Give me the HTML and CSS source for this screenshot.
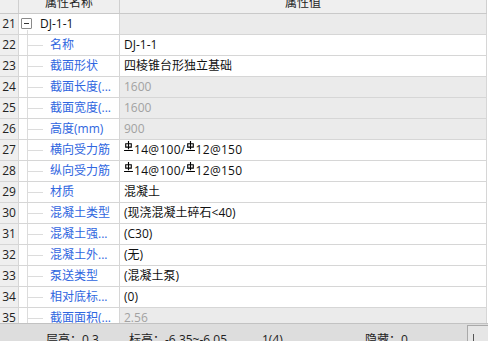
FILE: index.html
```html
<!DOCTYPE html>
<html lang="zh-CN">
<head>
<meta charset="utf-8">
<link rel="stylesheet" href="styles.css">
</head>
<body>
<div class="panel">
  <div class="grid">
    <div class="head">
      <div class="num"></div>
      <div class="hname">属性名称</div>
      <div class="hval">属性值</div>
    </div>
    <div class="row">
      <div class="num">21</div>
      <div class="name root"><span class="toggle"></span><span class="rtext">DJ-1-1</span></div>
      <div class="val ro"></div>
    </div>
    <div class="row">
      <div class="num">22</div>
      <div class="name tree">名称</div>
      <div class="val">DJ-1-1</div>
    </div>
    <div class="row">
      <div class="num">23</div>
      <div class="name tree">截面形状</div>
      <div class="val">四棱锥台形独立基础</div>
    </div>
    <div class="row">
      <div class="num">24</div>
      <div class="name tree">截面长度(...</div>
      <div class="val ro">1600</div>
    </div>
    <div class="row">
      <div class="num">25</div>
      <div class="name tree">截面宽度(...</div>
      <div class="val ro">1600</div>
    </div>
    <div class="row">
      <div class="num">26</div>
      <div class="name tree">高度(mm)</div>
      <div class="val ro">900</div>
    </div>
    <div class="row">
      <div class="num">27</div>
      <div class="name tree">横向受力筋</div>
      <div class="val rebar"><svg class="bar" viewBox="0 0 8 9" width="8" height="9"><path d="M4 0V7.5M1.5 2.5H6.5V5.5H1.5ZM0 8.5H8" fill="none" stroke="#000" stroke-width="1"/></svg>14@100/<svg class="bar" viewBox="0 0 8 9" width="8" height="9"><path d="M4 0V7.5M1.5 2.5H6.5V5.5H1.5ZM0 8.5H8" fill="none" stroke="#000" stroke-width="1"/></svg>12@150</div>
    </div>
    <div class="row">
      <div class="num">28</div>
      <div class="name tree">纵向受力筋</div>
      <div class="val rebar"><svg class="bar" viewBox="0 0 8 9" width="8" height="9"><path d="M4 0V7.5M1.5 2.5H6.5V5.5H1.5ZM0 8.5H8" fill="none" stroke="#000" stroke-width="1"/></svg>14@100/<svg class="bar" viewBox="0 0 8 9" width="8" height="9"><path d="M4 0V7.5M1.5 2.5H6.5V5.5H1.5ZM0 8.5H8" fill="none" stroke="#000" stroke-width="1"/></svg>12@150</div>
    </div>
    <div class="row">
      <div class="num">29</div>
      <div class="name tree">材质</div>
      <div class="val">混凝土</div>
    </div>
    <div class="row">
      <div class="num">30</div>
      <div class="name tree">混凝土类型</div>
      <div class="val">(现浇混凝土碎石&lt;40)</div>
    </div>
    <div class="row">
      <div class="num">31</div>
      <div class="name tree">混凝土强...</div>
      <div class="val">(C30)</div>
    </div>
    <div class="row">
      <div class="num">32</div>
      <div class="name tree">混凝土外...</div>
      <div class="val">(无)</div>
    </div>
    <div class="row">
      <div class="num">33</div>
      <div class="name tree">泵送类型</div>
      <div class="val">(混凝土泵)</div>
    </div>
    <div class="row">
      <div class="num">34</div>
      <div class="name tree">相对底标...</div>
      <div class="val">(0)</div>
    </div>
    <div class="row">
      <div class="num">35</div>
      <div class="name tree">截面面积(...</div>
      <div class="val ro">2.56</div>
    </div>
  </div>
  <div class="status">
    <span class="s1">层高：0.3</span>
    <span class="s2">标高：-6.35~-6.05</span>
    <span class="s3">1(4)</span>
    <span class="s4">隐藏：0</span>
    <span class="sbtn"></span>
  </div>
</div>
</body>
</html>
```

FILE: styles.css
```css
html, body {
  margin: 0;
  padding: 0;
  background: #ffffff;
}
body {
  width: 488px;
  height: 341px;
  overflow: hidden;
  font-family: "Open Sans", "Noto Sans CJK SC", sans-serif;
  font-size: 12px;
  color: #111;
}
.panel {
  width: 488px;
  height: 341px;
  display: flex;
  flex-direction: column;
  overflow: hidden;
}
.grid {
  height: 323px;
  flex: none;
  overflow: hidden;
  width: 487px;
}
.head {
  display: flex;
  height: 20px;
  margin-top: -7px;
  background: #efefef;
  border-bottom: 1px solid #c9c9c9;
  line-height: 20px;
  color: #222;
}
.head .num {
  border-right: 1px solid #cfcfcf;
}
.hname {
  width: 100px;
  border-right: 1px solid #cfcfcf;
  text-align: center;
}
.hval {
  flex: 1;
  border-right: 1px solid #cfcfcf;
  text-align: center;
}
.row {
  display: flex;
  height: 20px;
  border-bottom: 1px solid #d6d6d6;
  line-height: 20px;
}
.num {
  width: 18px;
  flex: none;
  background: #efefef;
  border-right: 1px solid #d6d6d6;
  text-align: center;
  color: #222;
}
.name {
  width: 100px;
  flex: none;
  border-right: 1px solid #d6d6d6;
  background-color: #fff;
  white-space: nowrap;
  overflow: hidden;
}
.tree {
  padding-left: 31px;
  width: 69px;
  color: #2f66e0;
  background-image:
    linear-gradient(#dcdcdc, #dcdcdc),
    linear-gradient(#dcdcdc, #dcdcdc);
  background-size: 1px 100%, 15px 1px;
  background-position: 8px 0, 9px 10px;
  background-repeat: no-repeat;
}
.root {
  display: flex;
  align-items: center;
  background-image: linear-gradient(#dcdcdc, #dcdcdc);
  background-size: 1px 4px;
  background-position: 8px 16px;
  background-repeat: no-repeat;
}
.toggle {
  width: 9px;
  height: 9px;
  border: 1px solid #8a8a8a;
  margin-left: 2px;
  margin-top: -1px;
  background:
    linear-gradient(#333, #333) center / 5px 1px no-repeat,
    #fff;
  border-radius: 1px;
  flex: none;
}
.rtext {
  margin-left: 8px;
  color: #111;
}
.val {
  flex: 1;
  border-right: 1px solid #d6d6d6;
  padding-left: 4px;
  white-space: nowrap;
  color: #111;
  background: #fff;
}
.val.ro {
  background: #ebebeb;
  color: #a2a2a2;
}
.rebar {
  letter-spacing: 0.3px;
}
.bar {
  width: 9px;
  height: 10px;
  vertical-align: 3px;
  margin-right: 1px;
}
.status {
  flex: 1;
  position: relative;
  background: #dddddd;
  border-top: 1px solid #c2c2c2;
  display: flex;
  align-items: flex-start;
  padding-top: 8px;
  line-height: 16px;
  color: #222;
  white-space: nowrap;
}
.s1 { margin-left: 46px; width: 83px; flex: none; }
.s2 { width: 133px; flex: none; }
.s3 { width: 103px; flex: none; }
.s4 { width: 80px; flex: none; }
.sbtn {
  position: absolute;
  left: 467px;
  top: 1px;
  width: 22px;
  height: 20px;
  box-sizing: border-box;
  border: 1px solid #a9a9a9;
  background: linear-gradient(#555, #555) 5px 8px / 1px 8px no-repeat, #e6e6e6;
}
```
